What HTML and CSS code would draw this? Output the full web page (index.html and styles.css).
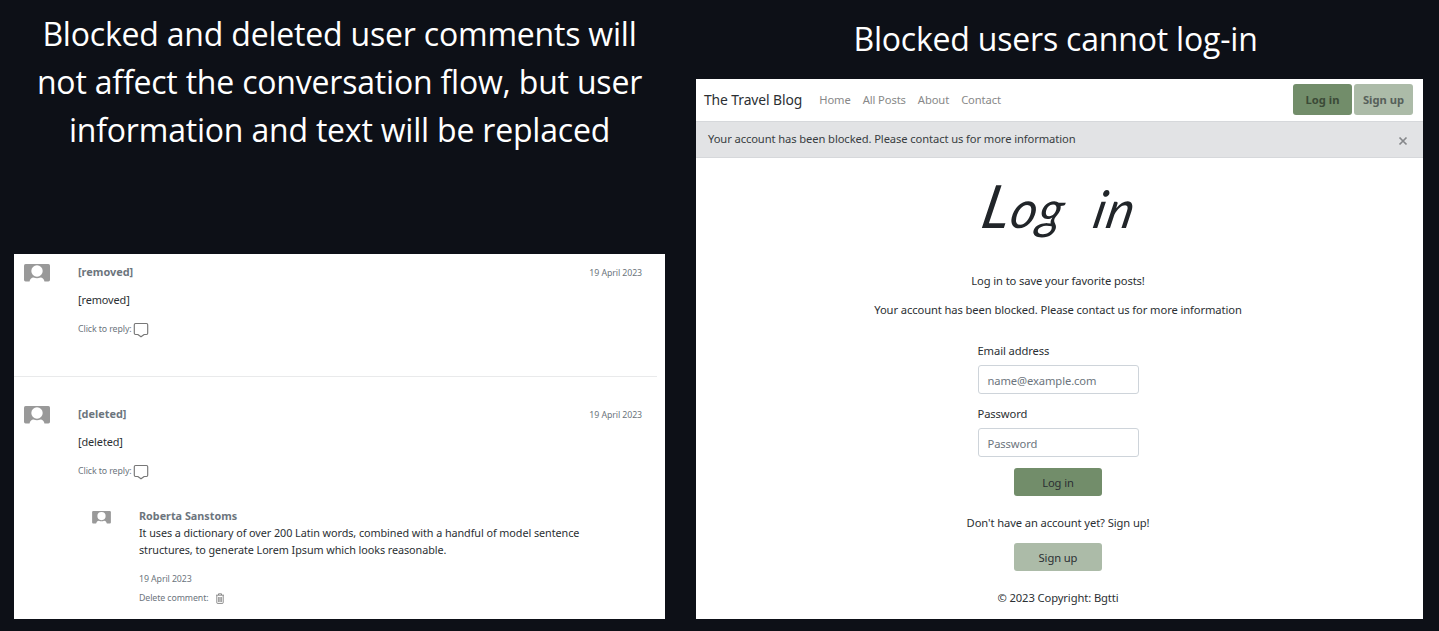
FILE: index.html
```html
<!DOCTYPE html>
<html lang="en">
<head>
<meta charset="utf-8">
<title>The Travel Blog</title>
<link rel="stylesheet" href="styles.css">
</head>
<body>
<svg class="defs" aria-hidden="true">
  <symbol id="avatar" viewBox="0 0 26 18"><rect width="26" height="17.4" rx="1.6" fill="#999"/><circle cx="13" cy="7" r="5.7" fill="#fff"/><path d="M5.500 18c.3-3 2-4.600 4-4.600 2 1 5 1 7 0 2 0 3.700 1.600 4 4.600z" fill="#fff"/></symbol>
  <symbol id="reply" viewBox="0 0 16 16"><path d="M2.500 1.500h11q1.200 0 1.200 1.200v8.600q0 1.200-1.200 1.200h-2.300L8 14.800l-3.200-2.300H2.500q-1.200 0-1.200-1.200V2.700q0-1.200 1.200-1.200z" fill="none" stroke="#777" stroke-width="1.150" stroke-linejoin="round"/></symbol>
  <symbol id="trash" viewBox="0 0 10 11"><path d="M1 2.200h8M3.500 2V.8h3V2M1.800 2.500v7.200q0 .7.700.7h5q.7 0 .7-.7V2.500M3.700 4v5M5 4v5M6.300 4v5" fill="none" stroke="#777" stroke-width=".85"/></symbol>
</svg>
<main class="board">
  <section class="left">
    <h2 class="headline">Blocked and deleted user comments will<br>not affect the conversation flow, but user<br>information and text will be replaced</h2>
    <div class="comments">
      <article class="comment">
        <svg class="avatar"><use href="#avatar"/></svg>
        <div class="body">
          <div class="top"><b class="name">[removed]</b><time class="date">19 April 2023</time></div>
          <p class="text">[removed]</p>
          <div class="reply"><span>Click to reply:</span><svg class="reply-icon"><use href="#reply"/></svg></div>
        </div>
      </article>
      <hr class="rule">
      <article class="comment">
        <svg class="avatar"><use href="#avatar"/></svg>
        <div class="body">
          <div class="top"><b class="name">[deleted]</b><time class="date">19 April 2023</time></div>
          <p class="text">[deleted]</p>
          <div class="reply"><span>Click to reply:</span><svg class="reply-icon"><use href="#reply"/></svg></div>
        </div>
      </article>
      <article class="nested">
        <svg class="avatar-small"><use href="#avatar"/></svg>
        <div class="nested-body">
          <b class="name">Roberta Sanstoms</b>
          <p class="nested-text">It uses a dictionary of over 200 Latin words, combined with a handful of model sentence<br>structures, to generate Lorem Ipsum which looks reasonable.</p>
          <time class="nested-date">19 April 2023</time>
          <div class="delete"><span>Delete comment:</span><svg class="trash"><use href="#trash"/></svg></div>
        </div>
      </article>
    </div>
  </section>
  <section class="right">
    <h2 class="headline single">Blocked users cannot log-in</h2>
    <div class="site">
      <nav class="nav">
        <a class="brand">The Travel Blog</a>
        <a class="link">Home</a><a class="link">All Posts</a><a class="link">About</a><a class="link">Contact</a>
        <a class="nav-btn dark">Log in</a><a class="nav-btn light">Sign up</a>
      </nav>
      <div class="alert"><span>Your account has been blocked. Please contact us for more information</span><svg class="close" viewBox="0 0 10 10"><path d="M1.500 1.500l7 7M8.500 1.500l-7 7" stroke="#85878a" stroke-width="1.700"/></svg></div>
      <div class="login">
        <h1 class="script"><span class="script-cap">L</span>og in</h1>
        <p class="lead">Log in to save your favorite posts!</p>
        <p class="lead second">Your account has been blocked. Please contact us for more information</p>
        <form class="form">
          <label class="label">Email address</label>
          <div class="input">name@example.com</div>
          <label class="label">Password</label>
          <div class="input">Password</div>
        </form>
        <a class="btn dark">Log in</a>
        <p class="lead ask">Don't have an account yet? Sign up!</p>
        <a class="btn light">Sign up</a>
        <p class="lead copy">© 2023 Copyright: <span class="author">Bgtti</span></p>
      </div>
    </div>
  </section>
</main>
</body>
</html>
```
FILE: styles.css
```css
* { box-sizing: border-box; }
body { margin: 0; width: 1439px; height: 631px; overflow: hidden; background: #0d1017; font-family: "Noto Sans", sans-serif; font-size: 11.2px; line-height: 17px; letter-spacing: -.1px; color: #2b2f33; white-space: nowrap; }
p, h1, h2 { margin: 0; font-weight: 400; }
svg { display: block; flex: none; }
.defs { position: absolute; width: 0; height: 0; }
.board { display: flex; gap: 31px; padding-left: 14px; }
.left { width: 651px; }
.right { width: 727px; }
.headline { height: 254px; padding: 10px 0 0; font-family: "Open Sans", sans-serif; font-size: 32px; line-height: 48px; letter-spacing: -.2px; color: #fff; text-align: center; }
.single { height: 79px; padding: 15px 8px 0 0; }
.comments { height: 365px; background: #fff; font-size: 10.9px; }
.comment { display: flex; height: 110px; padding: 9px 23px 0 10px; }
.avatar { width: 26px; height: 18px; margin-top: 1px; }
.body { flex: 1; margin-left: 28px; }
.top { display: flex; justify-content: space-between; align-items: center; }
.name { display: block; color: #6c757d; letter-spacing: 0; }
.date, .reply, .nested-date, .delete { color: #6c757d; font-size: 8.8px; }
.date { padding-top: 2px; margin-bottom: -2px; }
.text { margin-top: 11px; }
.reply { display: flex; align-items: center; gap: 1px; margin-top: 13px; }
.reply-icon { width: 16px; height: 16px; }
.rule { width: 643px; height: 1px; margin: 12px 0 19px; border: 0; background: #e9eaeb; }
.nested { display: flex; margin-top: 1px; padding-left: 78px; font-size: 10.8px; }
.avatar-small { width: 19px; height: 13px; margin-top: 4px; }
.nested-body { margin-left: 28px; }
.nested-text { letter-spacing: -.06px; }
.nested-date { display: block; margin-top: 13px; }
.delete { display: flex; align-items: center; gap: 7px; margin-top: 2px; }
.trash { width: 10px; height: 11px; }
.site { height: 540px; background: #fff; }
.nav { display: flex; align-items: center; height: 42px; padding: 0 10px 2px 8px; }
.brand { margin-right: 17px; font-size: 13.9px; }
.link { margin-right: 12px; color: #888; }
.nav-btn { display: flex; align-items: center; justify-content: center; width: 59px; height: 31px; border-radius: 3px; font-weight: 700; margin-left: 2px; letter-spacing: 0; }
.nav .dark { margin-left: auto; color: #3b4a37; }
.nav .light { color: #56605a; }
.dark { background: #728d6a; }
.light { background: #acbba8; }
.alert { display: flex; align-items: center; justify-content: space-between; height: 37px; padding: 0 15px 2px 12px; background: #e2e3e5; border: solid #d6d8db; border-width: 1px 0; color: #383d41; }
.close { width: 10px; height: 10px; margin-top: 4px; }
.login { display: flex; flex-direction: column; align-items: center; padding-right: 3px; }
.script { height: 114px; padding-top: 15px; font: italic 400 40px/70px Lato, sans-serif; letter-spacing: 1px; word-spacing: 13px; color: #212529; transform: skewX(-12deg) scale(1.27, 1.3); }
.script-cap { font-size: 46px; }
.second { margin-top: 12px; }
.form { width: 161px; margin-top: 24px; }
.label { display: block; }
.input { height: 29px; margin: 6px 0 11px; padding: 6px 9px; border: 1px solid #ced4da; border-radius: 3px; color: #6c757d; }
.btn { display: flex; align-items: center; justify-content: center; width: 88px; height: 28px; border-radius: 3px; }
.ask { margin: 18px 0 12px; }
.copy { margin-top: 18px; }
```
